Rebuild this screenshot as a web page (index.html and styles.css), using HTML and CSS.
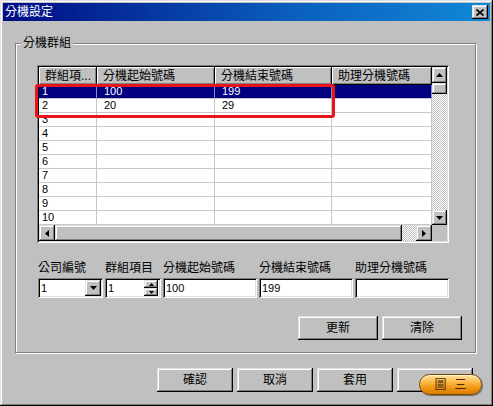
FILE: index.html
```html
<!DOCTYPE html>
<html lang="zh-Hant">
<head>
<meta charset="utf-8">
<title>分機設定</title>
<link rel="stylesheet" href="styles.css">
</head>
<body>
<div class="window">
  <div class="titlebar">
    <span class="title">分機設定</span>
    <div class="close raised"><svg width="8" height="7" viewBox="0 0 8 7"><path d="M0.5 0.5 L7.5 6.5 M7.5 0.5 L0.5 6.5" stroke="#000" stroke-width="1.7" fill="none"/></svg></div>
  </div>

  <div class="group">
    <div class="legend">分機群組</div>

    <div class="listview">
      <div class="lv-main">
        <div class="lv-header">
          <div class="hcell">群組項...</div>
          <div class="hcell">分機起始號碼</div>
          <div class="hcell">分機結束號碼</div>
          <div class="hcell">助理分機號碼</div>
        </div>
        <div class="row sel"><div class="cell">1</div><div class="cell">100</div><div class="cell">199</div><div class="cell"></div></div>
        <div class="row"><div class="cell">2</div><div class="cell">20</div><div class="cell">29</div><div class="cell"></div></div>
        <div class="row"><div class="cell">3</div><div class="cell"></div><div class="cell"></div><div class="cell"></div></div>
        <div class="row"><div class="cell">4</div><div class="cell"></div><div class="cell"></div><div class="cell"></div></div>
        <div class="row"><div class="cell">5</div><div class="cell"></div><div class="cell"></div><div class="cell"></div></div>
        <div class="row"><div class="cell">6</div><div class="cell"></div><div class="cell"></div><div class="cell"></div></div>
        <div class="row"><div class="cell">7</div><div class="cell"></div><div class="cell"></div><div class="cell"></div></div>
        <div class="row"><div class="cell">8</div><div class="cell"></div><div class="cell"></div><div class="cell"></div></div>
        <div class="row"><div class="cell">9</div><div class="cell"></div><div class="cell"></div><div class="cell"></div></div>
        <div class="row"><div class="cell">10</div><div class="cell"></div><div class="cell"></div><div class="cell"></div></div>
      </div>
      <div class="vscroll">
        <div class="sbtn raised v-up"><svg width="7" height="4" viewBox="0 0 7 4"><polygon points="3.5,0 7,4 0,4" fill="#000"/></svg></div>
        <div class="vthumb raised"></div>
        <div class="track"></div>
        <div class="sbtn raised v-down"><svg width="7" height="4" viewBox="0 0 7 4"><polygon points="0,0 7,0 3.5,4" fill="#000"/></svg></div>
      </div>
      <div class="hscroll">
        <div class="sbtn raised h-btn"><svg width="4" height="7" viewBox="0 0 4 7"><polygon points="0,3.5 4,0 4,7" fill="#000"/></svg></div>
        <div class="hthumb raised"></div>
        <div class="track"></div>
        <div class="sbtn raised h-btn"><svg width="4" height="7" viewBox="0 0 4 7"><polygon points="0,0 4,3.5 0,7" fill="#000"/></svg></div>
      </div>
      <div class="corner"></div>
    </div>

    <div class="fields">
      <div class="field f-company">
        <span class="lbl">公司編號</span>
        <div class="box"><span class="val">1</span><div class="combo-btn raised"><svg width="7" height="4" viewBox="0 0 7 4"><polygon points="0,0 7,0 3.5,4" fill="#000"/></svg></div></div>
      </div>
      <div class="field f-group">
        <span class="lbl">群組項目</span>
        <div class="box"><span class="val">1</span><div class="spin"><div class="spin-btn raised"><svg width="7" height="4" viewBox="0 0 7 4"><polygon points="3.5,0 7,4 0,4" fill="#000"/></svg></div><div class="spin-btn raised"><svg width="7" height="4" viewBox="0 0 7 4"><polygon points="0,0 7,0 3.5,4" fill="#000"/></svg></div></div></div>
      </div>
      <div class="field f-wide">
        <span class="lbl">分機起始號碼</span>
        <div class="box"><span class="val">100</span></div>
      </div>
      <div class="field f-wide">
        <span class="lbl">分機結束號碼</span>
        <div class="box"><span class="val">199</span></div>
      </div>
      <div class="field f-wide">
        <span class="lbl">助理分機號碼</span>
        <div class="box"><span class="val"></span></div>
      </div>
    </div>

    <div class="group-buttons">
      <div class="btn btn-lg raised">更新</div>
      <div class="btn btn-lg raised">清除</div>
    </div>
  </div>

  <div class="dialog-buttons">
    <div class="btn raised">確認</div>
    <div class="btn raised">取消</div>
    <div class="btn raised">套用</div>
    <div class="btn raised"></div>
  </div>

  <div class="red-mark"></div>
  <div class="badge"><span>圖</span><span>三</span></div>
</div>
</body>
</html>
```

FILE: styles.css
```css
* { box-sizing: border-box; margin: 0; padding: 0; }
html, body { width: 493px; height: 406px; overflow: hidden; }
body {
  font-family: "Liberation Sans", "Noto Sans CJK TC", sans-serif;
  font-size: 12px;
  color: #000;
  background: #c0c0c0;
}

.raised {
  background: #c0c0c0;
  box-shadow: inset -1px -1px #000, inset 1px 1px #dfdfdf, inset -2px -2px #808080, inset 2px 2px #fff;
}

.window {
  position: relative;
  width: 493px;
  height: 406px;
  padding: 3px;
  background: #c0c0c0;
  box-shadow: inset -1px -1px #000, inset 1px 1px #dfdfdf, inset -2px -2px #808080, inset 2px 2px #fff;
}

.titlebar {
  height: 18px;
  display: flex;
  align-items: center;
  justify-content: space-between;
  padding: 0 2px;
  background: linear-gradient(to right, #000c84, #0b5fbf 60%, #1188d6);
}
.title { color: #fff; font-size: 12px; line-height: 14px; }
.close {
  width: 16px;
  height: 14px;
  display: flex;
  align-items: center;
  justify-content: center;
}

.group {
  position: relative;
  margin: 22px 0 0 12px;
  width: 461px;
  height: 310px;
  border: 1px solid #808080;
  box-shadow: inset 1px 1px #fff, 1px 1px #fff;
  padding: 21px 13px 12px 21px;
  display: flex;
  flex-direction: column;
}
.legend {
  position: absolute;
  left: 5px;
  top: -8px;
  padding: 0 2px;
  line-height: 14px;
  background: #c0c0c0;
}

.listview {
  width: 412px;
  height: 178px;
  padding: 2px;
  display: grid;
  grid-template-columns: 393px 15px;
  grid-template-rows: 158px 16px;
  background: #fff;
  box-shadow: inset 1px 1px #808080, inset -1px -1px #fff, inset 2px 2px #000, inset -2px -2px #dfdfdf;
}
.lv-main { overflow: hidden; }
.lv-header, .row {
  display: grid;
  grid-template-columns: 58px 118px 117px 100px;
}
.hcell {
  height: 18px;
  line-height: 18px;
  padding-left: 6px;
  white-space: nowrap;
  overflow: hidden;
  background: #c0c0c0;
  box-shadow: inset -1px -1px #000, inset 1px 1px #fff, inset -2px -2px #808080;
}
.row { height: 14px; }
.cell {
  height: 14px;
  line-height: 13px;
  font-size: 11px;
  padding-left: 7px;
  border-right: 1px solid #c8c8c8;
  border-bottom: 1px solid #c8c8c8;
  white-space: nowrap;
}
.cell:first-child { padding-left: 3px; }
.row.sel .cell { background: #000080; color: #fff; border-right-color: #8c8cc0; }

.track {
  flex: 1;
  background: repeating-conic-gradient(#fff 0 25%, #c0c0c0 0 50%) 0 0 / 2px 2px;
}
.vscroll { display: flex; flex-direction: column; }
.sbtn { display: flex; align-items: center; justify-content: center; flex: none; }
.v-up { height: 16px; }
.v-down { height: 15px; }
.vthumb { height: 11px; flex: none; }
.hscroll { display: flex; }
.h-btn { width: 16px; }
.hthumb { width: 347px; flex: none; }
.corner { background: #c0c0c0; }

.fields {
  display: flex;
  gap: 2px;
  margin: 18px 0 0 1px;
}
.field { display: flex; flex-direction: column; gap: 3px; }
.lbl { line-height: 14px; white-space: nowrap; }
.f-company { width: 65px; }
.f-group { width: 56px; }
.f-wide { width: 94px; }
.box {
  height: 20px;
  padding: 2px;
  display: flex;
  align-items: center;
  background: #fff;
  font-size: 11px;
  box-shadow: inset 1px 1px #808080, inset -1px -1px #fff, inset 2px 2px #000, inset -2px -2px #dfdfdf;
}
.val { flex: 1; padding-left: 1px; line-height: 16px; }
.combo-btn {
  width: 16px;
  height: 16px;
  display: flex;
  align-items: center;
  justify-content: center;
}
.spin { width: 14px; height: 16px; display: flex; flex-direction: column; margin-right: 1px; }
.spin-btn { height: 8px; display: flex; align-items: center; justify-content: center; }
.spin-btn svg { width: 5px; height: 3px; }

.btn {
  width: 76px;
  height: 24px;
  display: flex;
  align-items: center;
  justify-content: center;
  line-height: 14px;
}
.btn-lg { width: 80px; }
.group-buttons {
  display: flex;
  justify-content: flex-end;
  gap: 4px;
  margin-top: 18px;
}
.dialog-buttons {
  display: flex;
  justify-content: flex-end;
  gap: 4px;
  margin: 15px 17px 0 0;
}

.red-mark {
  position: absolute;
  left: 35px;
  top: 84px;
  width: 300px;
  height: 34px;
  border: 3px solid #e8141c;
  border-radius: 3px;
}

.badge {
  position: absolute;
  left: 419px;
  top: 374px;
  width: 63px;
  height: 21px;
  border-radius: 11px;
  border: 1px solid #7a4500;
  background: linear-gradient(to bottom, #ffe2a0 0%, #fbb640 40%, #ee9410 70%, #d87c00 100%);
  box-shadow: inset 0 1px 1px rgba(255,255,255,0.7), 1px 1px 1px rgba(0,0,0,0.45);
  display: flex;
  align-items: center;
  justify-content: center;
  gap: 8px;
  color: #4a2600;
  font-size: 12px;
  line-height: 14px;
}
```
